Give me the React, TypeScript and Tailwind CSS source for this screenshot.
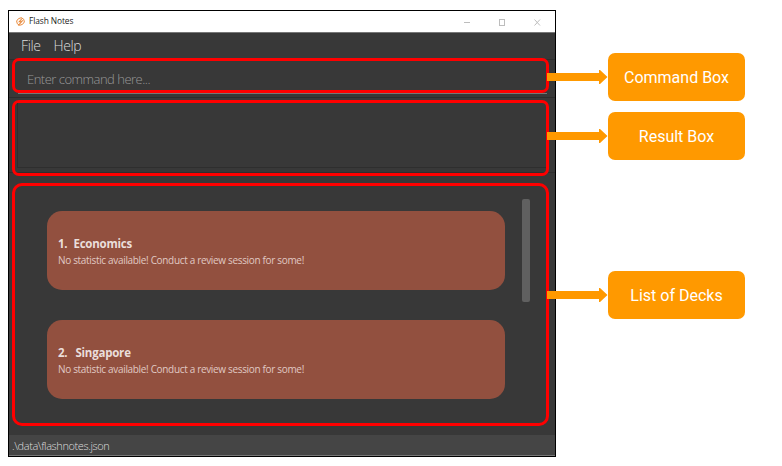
import React from "react";

const decks = [
  { index: "1.", name: "Economics", gap: "gap-[6px]" },
  { index: "2.", name: "Singapore", gap: "gap-[8px]" },
];

const note = "No statistic available! Conduct a review session for some!";

function TitleBar() {
  return (
    <div className="flex h-[22px] shrink-0 items-center border-b border-[#777777] bg-white pl-[7px] pr-[14px]">
      <svg width="9" height="9" viewBox="0 0 18 18" fill="none" stroke="#e8893a" className="shrink-0">
        <ellipse cx="9" cy="9" rx="7.8" ry="7" strokeWidth="1.8" transform="rotate(-35 9 9)" />
        <path d="M12 3 6.500 9.500h4.500L4.500 17" strokeWidth="2.2" />
        <path d="M13 6 11 10" strokeWidth="2" />
      </svg>
      <span className="ml-[4px] whitespace-pre font-['Open_Sans','Noto_Sans',sans-serif] text-[8.4px] leading-none tracking-[-0.1px] text-[#222222]">
        Flash Notes
      </span>
      <svg width="77" height="8" viewBox="0 0 77 8" fill="none" stroke="#bdbdbd" className="ml-auto shrink-0">
        <path d="M0 4.5H6" />
        <rect x="35.5" y="1.5" width="5" height="6" />
        <path d="M70.5 1.5l5.500 6M76 1.500l-5.500 6" />
      </svg>
    </div>
  );
}

function DeckCard({ index, name, gap }: { index: string; name: string; gap: string }) {
  return (
    <div className="h-[79px] w-[458px] rounded-[15px] bg-[#92503f] pl-[11px] pt-[25px] font-['Open_Sans','Noto_Sans',sans-serif] text-[#eadedb]">
      <div className={`flex h-[16px] items-center whitespace-pre text-[11.5px] font-bold leading-none tracking-[-0.22px] ${gap}`}>
        <span>{index}</span>
        <span>{name}</span>
      </div>
      <div className="flex h-[16px] items-center whitespace-pre text-[10px] leading-none tracking-[-0.33px] text-[#e0c9c3]">{note}</div>
    </div>
  );
}

function Callout({ label, className }: { label: string; className: string }) {
  return (
    <div className={`flex h-[48px] items-center ${className}`}>
      <svg width="61" height="14" viewBox="0 0 61 14" fill="#ff9900" className="shrink-0">
        <path d="M0 3H52V0h1L60.500 7 53 14h-1V11H0z" />
      </svg>
      <div className="flex h-[48px] w-[137px] items-center justify-center rounded-[7px] bg-[#ff9900] pt-[1px] font-[Roboto,sans-serif] text-[16px] leading-none text-white">
        <span className="whitespace-pre">{label}</span>
      </div>
    </div>
  );
}

export default function App() {
  return (
    <div className="flex h-[466px] w-[782px] overflow-hidden bg-white pl-[8px] pt-[10px]">
      <div className="flex h-[447px] w-[548px] shrink-0 flex-col border border-black bg-[#383838]">
        <TitleBar />
        <nav className="flex h-[25px] shrink-0 items-center gap-[13px] pl-[12px] font-['Open_Sans','Noto_Sans',sans-serif] text-[14px] font-light leading-none tracking-[-0.4px] text-[#dddddd]">
          <span>File</span>
          <span>Help</span>
        </nav>
        <section className="h-[40px] shrink-0 border-b border-[#2c2c2c] bg-[linear-gradient(#383838_1px,#2e2e2e_1px,#2e2e2e_2px,#383838_2px)] px-[3px]">
          <div className="flex h-[35px] w-[537px] items-center rounded-[7px] border-[3px] border-[#ff0000] bg-[#383838] pl-[12px] pt-[7px] font-['Open_Sans','Noto_Sans',sans-serif] text-[13px] font-light leading-none tracking-[-0.5px] text-[#999999]">
            <span className="whitespace-pre">Enter command here...</span>
          </div>
          <div className="ml-[6px] h-px w-[529px] bg-[#777777]" />
        </section>
        <section className="h-[85px] shrink-0 bg-[linear-gradient(#383838_74px,#2e2e2e_74px,#2e2e2e_75px,#383838_75px)] px-[3px] pt-[2px]">
          <div className="h-[76px] w-[537px] rounded-[7px] border-[3px] border-[#ff0000] pl-[2px]">
            <div className="h-[65px] w-[529px] border-b border-l border-[#2e2e2e]" />
          </div>
        </section>
        <section className="h-[252px] shrink-0 px-[3px]">
          <div className="flex h-[243px] w-[537px] rounded-[10px] border-[3px] border-[#ff0000] pl-[32px]">
            <div className="flex flex-col gap-[30px] pt-[25px]">
              {decks.map((deck) => (
                <DeckCard key={deck.name} {...deck} />
              ))}
            </div>
            <div className="ml-[17px] mt-[13px] h-[103px] w-[8px] rounded-[2px] bg-[#606060]" />
          </div>
        </section>
        <footer className="flex flex-1 items-center border-b border-[#777777] bg-[#454545] pl-[3px] pt-px font-['Open_Sans','Noto_Sans',sans-serif] text-[11px] font-light leading-none tracking-[-0.4px] text-[#dddddd]">
          <span className="whitespace-pre">{".\\data\\flashnotes.json"}</span>
        </footer>
      </div>
      <div className="relative -ml-[9px] shrink-0">
        <Callout label="Command Box" className="mt-[43px]" />
        <Callout label="Result Box" className="mt-[11px]" />
        <Callout label="List of Decks" className="mt-[111px]" />
      </div>
    </div>
  );
}
